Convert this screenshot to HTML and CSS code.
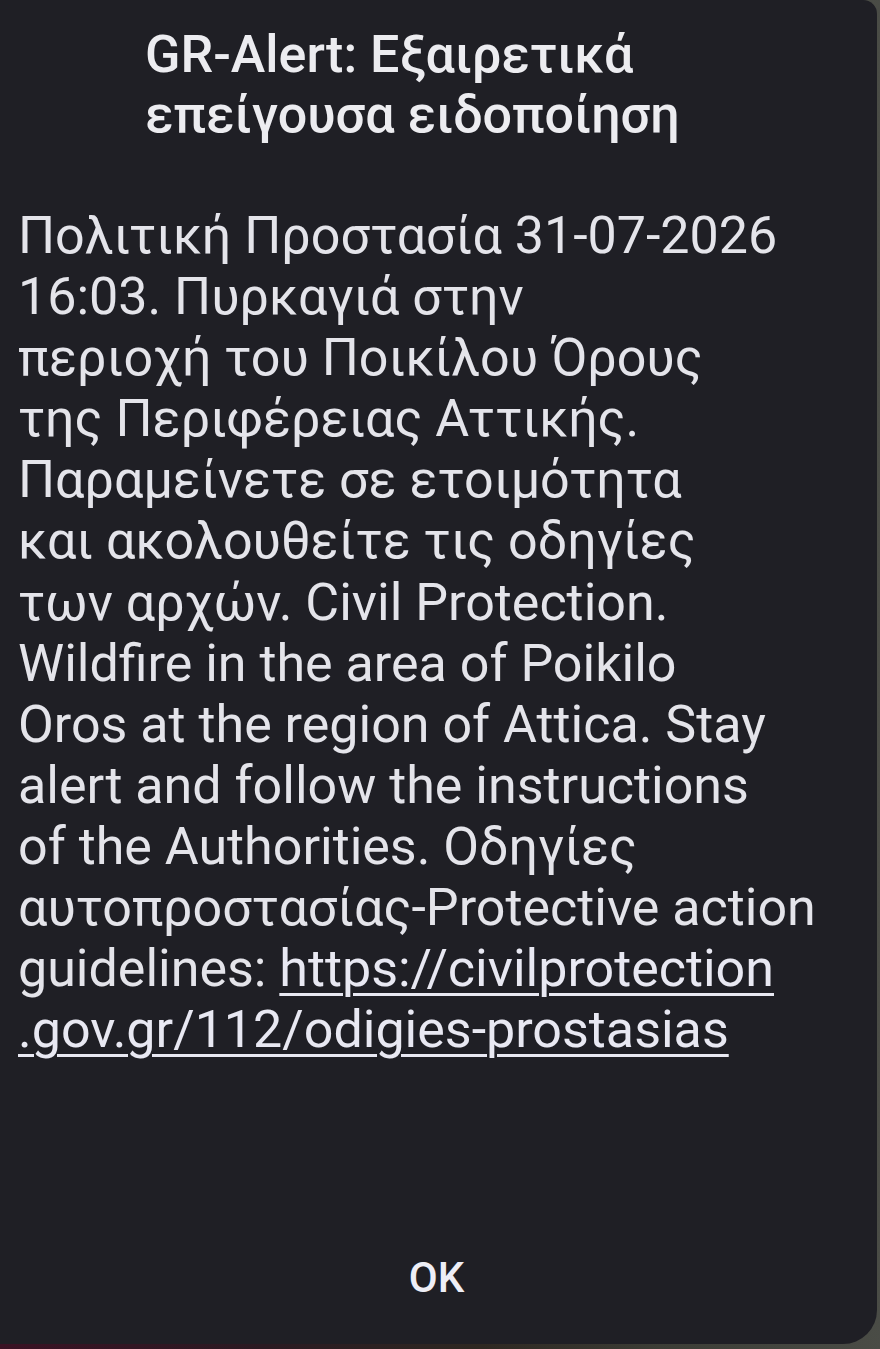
FILE: index.html
```html
<!DOCTYPE html>
<html lang="el">
<head>
  <meta charset="UTF-8">
  <meta name="viewport" content="width=device-width, initial-scale=1.0">
  <title>GR-Alert</title>
  <link rel="stylesheet" href="styles.css">
</head>
<body>
  <div class="dialog">
    <h1 class="title">GR-Alert: Εξαιρετικά<br>επείγουσα ειδοποίηση</h1>
    <p class="message">
      Πολιτική Προστασία 31-07-2026<br>
      16:03. Πυρκαγιά στην<br>
      περιοχή του Ποικίλου Όρους<br>
      της Περιφέρειας Αττικής.<br>
      Παραμείνετε σε ετοιμότητα<br>
      και ακολουθείτε τις οδηγίες<br>
      των αρχών. Civil Protection.<br>
      Wildfire in the area of Poikilo<br>
      Oros at the region of Attica. Stay<br>
      alert and follow the instructions<br>
      of the Authorities. Οδηγίες<br>
      αυτοπροστασίας-Protective action<br>
      guidelines: <a href="https://civilprotection.gov.gr/112/odigies-prostasias" class="link">https://civilprotection<br>.gov.gr/112/odigies-prostasias</a>
    </p>
    <div class="actions">
      <button class="button-ok">OK</button>
    </div>
  </div>
</body>
</html>
```

FILE: styles.css
```css
html, body {
  height: 100%;
}
body {
  margin: 0;
  padding: 0;
  background: linear-gradient(90deg, #3a1224 0%, #2a1a22 30%, #2e2822 55%, #3c3d36 75%, #4a4c46 100%);
  font-family: Roboto, "Noto Sans", "DejaVu Sans", sans-serif;
  color: #e8e8ee;
  overflow: hidden;
}
.dialog {
  box-sizing: border-box;
  width: 877px;
  height: 1344px;
  background-color: #1f1f25;
  border-radius: 0 14px 34px 0;
  display: flex;
  flex-direction: column;
  padding-top: 25px;
}
.title {
  margin: 0;
  padding-left: 145px;
  font-size: 52px;
  font-weight: 500;
  line-height: 60px;
  white-space: nowrap;
  color: #ececf0;
}
.message {
  margin: 60px 0 0 0;
  padding-left: 18px;
  font-size: 52px;
  font-weight: 400;
  line-height: 61.1px;
  white-space: nowrap;
  color: #e4e4ea;
}
.link {
  color: #e8e8f2;
  text-decoration: underline;
  text-decoration-thickness: 3px;
  text-underline-offset: 7px;
}
.actions {
  margin-top: auto;
  display: flex;
  justify-content: center;
  padding: 0 4px 32px 0;
}
.button-ok {
  background: none;
  border: none;
  padding: 10px 20px;
  font-family: Roboto, "Noto Sans", sans-serif;
  font-size: 42px;
  font-weight: 500;
  color: #eeeef6;
  cursor: pointer;
}
```
